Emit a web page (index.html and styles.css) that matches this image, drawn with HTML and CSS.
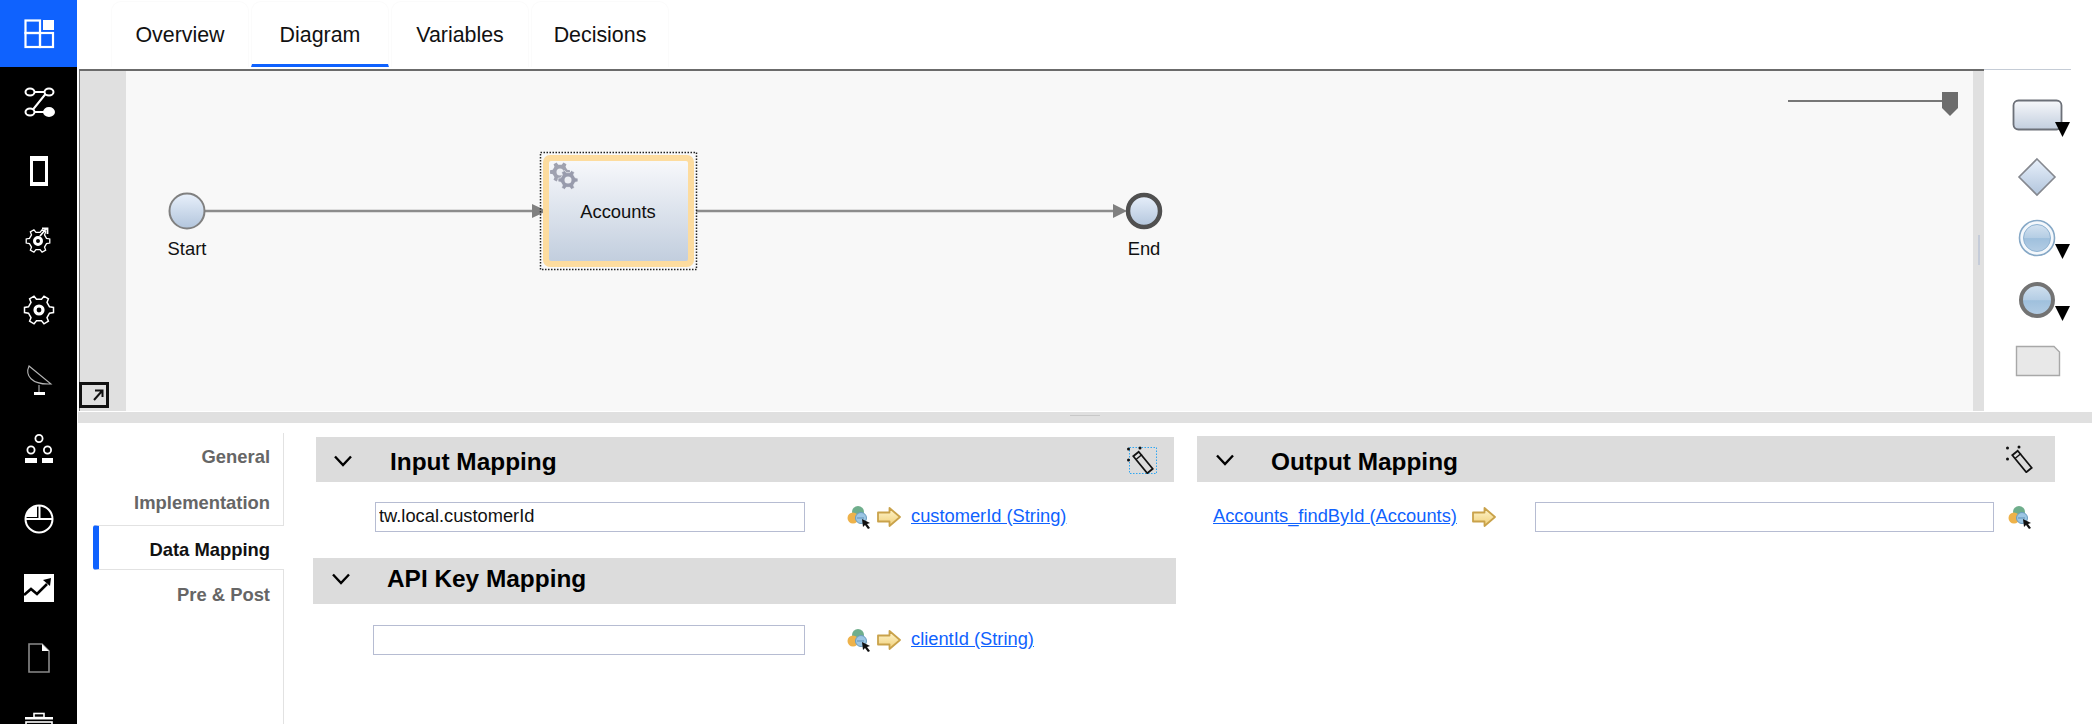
FILE: index.html
```html
<!DOCTYPE html>
<html lang="en">
<head>
<meta charset="UTF-8">
<title>Service Flow Diagram</title>
<link rel="stylesheet" href="styles.css">
</head>
<body>
<!-- shared gradients and symbols -->
<svg class="defs" aria-hidden="true">
    <defs>
        <linearGradient id="gradTask" x1="0" y1="0" x2="0" y2="1">
            <stop offset="0" stop-color="#f7f8fb"/>
            <stop offset="1" stop-color="#c2cede"/>
        </linearGradient>
        <linearGradient id="gradEvent" x1="0" y1="0" x2="0" y2="1">
            <stop offset="0" stop-color="#e8f0fb"/>
            <stop offset="1" stop-color="#b2c5dc"/>
        </linearGradient>
        <linearGradient id="gradBall" x1="0" y1="0" x2="0" y2="1">
            <stop offset="0" stop-color="#d3e2f0"/>
            <stop offset="0.5" stop-color="#b4cde4"/>
            <stop offset="0.52" stop-color="#9fc0dd"/>
            <stop offset="1" stop-color="#b4cde4"/>
        </linearGradient>
        <linearGradient id="gradArrow" x1="0" y1="0" x2="0" y2="1">
            <stop offset="0" stop-color="#fff6cf"/>
            <stop offset="1" stop-color="#f0cf78"/>
        </linearGradient>
        <symbol id="gear" viewBox="-16 -16 32 32">
            <polygon points="10.5,-3.2 14.5,-2.5 14.5,2.5 10.5,3.2 8,7.5 9.4,11.2 5,13.8 2.5,10.7 -2.5,10.7 -5,13.8 -9.4,11.2 -8,7.5 -10.5,3.2 -14.5,2.5 -14.5,-2.5 -10.5,-3.2 -8,-7.5 -9.4,-11.2 -5,-13.8 -2.5,-10.7 2.5,-10.7 5,-13.8 9.4,-11.2 8,-7.5"/>
        </symbol>
        <symbol id="picker" viewBox="0 0 24 24">
            <circle cx="11" cy="7" r="6" fill="#6fae8c"/>
            <circle cx="6" cy="13" r="5.5" fill="#eeb24a"/>
            <circle cx="14" cy="13" r="5.5" fill="#9cc6e4" stroke="#6a9cc0"/>
            <path d="M10 13h7" stroke="#5f8fb5"/>
            <polygon points="15,14 23,18 20,19 23,23 21,24 18,20 16,22" fill="#111"/>
        </symbol>
        <symbol id="arrow" viewBox="0 0 24 20">
            <path d="M1 5.5H12.5V1L23 10L12.5 19V14.5H1Z" fill="url(#gradArrow)" stroke="#c9a24a" stroke-width="1.8" stroke-linejoin="round"/>
        </symbol>
        <symbol id="wand" viewBox="0 0 30 28">
            <polygon points="11.7,5.8 25.7,22.8 20.3,27.2 6.3,10.2" fill="none" stroke="#111" stroke-width="1.8"/>
            <path d="M9 13.5L15 8.5" stroke="#111" stroke-width="1.4"/>
            <circle cx="1.5" cy="3" r="1.5" fill="#111"/>
            <circle cx="13" cy="2" r="1.5" fill="#111"/>
            <circle cx="1.5" cy="14" r="1.5" fill="#111"/>
        </symbol>
        <symbol id="chevron" viewBox="0 0 20 12">
            <path d="M2 1.5L10 10L18 1.5" fill="none" stroke="#000" stroke-width="2.4"/>
        </symbol>
    </defs>
</svg>

<nav class="side">
    <a class="side-item active">
        <svg viewBox="0 0 32 32" fill="none" stroke="#fff" stroke-width="2.2">
            <rect x="2.5" y="2.5" width="14.5" height="12.5"/>
            <rect x="2.5" y="15" width="14.5" height="14"/>
            <rect x="17" y="15" width="13" height="14"/>
            <rect x="20" y="2" width="11" height="10" fill="#fff" stroke="none"/>
        </svg>
    </a>
    <a class="side-item">
        <svg viewBox="0 0 32 32" fill="none" stroke="#fff" stroke-width="2">
            <ellipse cx="7" cy="6" rx="4.5" ry="3.5"/>
            <ellipse cx="26" cy="6" rx="4.5" ry="3.5"/>
            <ellipse cx="7" cy="26" rx="4.5" ry="3.5"/>
            <ellipse cx="26" cy="26" rx="5" ry="4" fill="#fff"/>
            <path d="M11.5 6H21.5M11.5 26H21M22.5 8L10 23.5"/>
        </svg>
    </a>
    <a class="side-item">
        <svg viewBox="0 0 32 32">
            <rect x="7" y="1" width="18" height="30" fill="#fff"/>
            <rect x="10" y="6" width="12" height="21" fill="#000"/>
        </svg>
    </a>
    <a class="side-item">
        <svg viewBox="0 0 32 32">
            <use href="#gear" x="2" y="3" width="26" height="26" fill="none" stroke="#fff" stroke-width="1.6"/>
            <circle cx="15" cy="16" r="3.5" fill="none" stroke="#fff" stroke-width="3"/>
            <path d="M17 11L23 4M19 3.5H24.5V9" fill="none" stroke="#fff" stroke-width="1.8"/>
        </svg>
    </a>
    <a class="side-item">
        <svg viewBox="0 0 32 32">
            <use href="#gear" x="0" y="0" width="32" height="32" fill="none" stroke="#fff" stroke-width="1.5"/>
            <circle cx="16" cy="16" r="4" fill="none" stroke="#fff" stroke-width="3.2"/>
        </svg>
    </a>
    <a class="side-item">
        <svg viewBox="0 0 32 32" fill="none">
            <path d="M6 2C2 11 8 21 28 20Z" stroke="#b5b5b5" stroke-width="1.1"/>
            <path d="M16 21V28" stroke="#b5b5b5" stroke-width="1.1"/>
            <rect x="11" y="28" width="11" height="3" fill="#fff"/>
        </svg>
    </a>
    <a class="side-item">
        <svg viewBox="0 0 32 32" fill="none" stroke="#fff" stroke-width="1.8">
            <circle cx="16" cy="5.5" r="3.6"/>
            <circle cx="8" cy="17" r="3.6"/>
            <circle cx="24.5" cy="17" r="3.6"/>
            <rect x="2" y="25" width="12" height="5" fill="#fff" stroke="none"/>
            <rect x="19" y="25" width="11" height="5" fill="#fff" stroke="none"/>
        </svg>
    </a>
    <a class="side-item">
        <svg viewBox="0 0 32 32" fill="none" stroke="#fff" stroke-width="2">
            <circle cx="16" cy="16" r="13.5"/>
            <path d="M14 14V2.8A13.5 13.5 0 0 0 2.8 14Z" fill="#fff" stroke="none"/>
            <path d="M2.5 16H29.5M16.5 16V2.5"/>
        </svg>
    </a>
    <a class="side-item">
        <svg viewBox="0 0 32 32">
            <rect x="1" y="2" width="30" height="28" fill="#fff"/>
            <path d="M1 23L8 17L14 22L24 12" fill="none" stroke="#000" stroke-width="2.6"/>
            <polygon points="20,8 28,6 27,14" fill="#000"/>
        </svg>
    </a>
    <a class="side-item">
        <svg viewBox="0 0 32 32">
            <path d="M6 2H19L26 9V30H6Z" fill="none" stroke="#8a8a8a" stroke-width="1.6"/>
            <path d="M19 2L26 9H19Z" fill="#fff"/>
        </svg>
    </a>
    <a class="side-item">
        <svg viewBox="0 0 32 32">
            <rect x="11" y="2.5" width="10" height="4" fill="none" stroke="#fff" stroke-width="1.6"/>
            <rect x="2" y="6" width="28" height="2.5" fill="#fff"/>
            <rect x="3" y="11" width="26" height="18" fill="none" stroke="#fff" stroke-width="1.6"/>
        </svg>
    </a>
</nav>

<div class="main">
    <div class="tabs">
        <a class="tab">Overview</a>
        <a class="tab active">Diagram</a>
        <a class="tab">Variables</a>
        <a class="tab">Decisions</a>
    </div>

    <div class="editor">
        <div class="canvas">
            <div class="strip-left">
                <div class="expand">
                    <svg viewBox="0 0 24 20" fill="none" stroke="#111" stroke-width="2">
                        <path d="M12 15L20 6M13 5.5H20.5V12"/>
                    </svg>
                </div>
            </div>
            <!-- viewBox uses page coordinates, the flow is a free canvas -->
            <svg class="flow" viewBox="126 71 1847 340">
                <path d="M205 211H534M696 211H1115" stroke="#8c8c8c" stroke-width="2.4" fill="none"/>
                <polygon points="532,204 547,211 532,218" fill="#808080"/>
                <polygon points="1113,204 1127,211 1113,218" fill="#808080"/>

                <circle cx="187" cy="211" r="17.5" fill="url(#gradEvent)" stroke="#808080" stroke-width="2"/>
                <text class="node-label" x="187" y="255">Start</text>

                <rect x="540.5" y="152.5" width="156" height="117" fill="none" stroke="#222" stroke-width="1.5" stroke-dasharray="1.5 1.5"/>
                <rect x="543" y="155" width="151" height="112" rx="7" fill="#fddc9f"/>
                <rect x="549" y="161" width="139" height="100" rx="2" fill="url(#gradTask)"/>
                <use href="#gear" x="549" y="161" width="22" height="22" fill="#a0a2b0"/>
                <circle cx="560" cy="172" r="3.5" fill="#eceef3"/>
                <use href="#gear" x="557" y="169" width="22" height="22" fill="#989bac" stroke="#eef0f5" stroke-width="1"/>
                <circle cx="568" cy="180" r="3.5" fill="#eceef3"/>
                <text class="node-label" x="618" y="218">Accounts</text>

                <circle cx="1144" cy="211" r="16" fill="url(#gradEvent)" stroke="#505050" stroke-width="4.5"/>
                <text class="node-label" x="1144" y="255">End</text>

                <path d="M1788 101H1958" stroke="#777" stroke-width="2"/>
                <polygon points="1942,92 1958,92 1958,108 1950,116 1942,108" fill="#6d6d6d"/>
            </svg>
            <div class="strip-right"><span class="grip-v"></span></div>
        </div>
        <div class="palette">
            <svg viewBox="0 0 70 60">
                <rect x="11.5" y="15.5" width="48" height="29" rx="5" fill="url(#gradTask)" stroke="#6c7078" stroke-width="1.8"/>
                <polygon points="53,37 68,37 60.5,52" fill="#000"/>
            </svg>
            <svg viewBox="0 0 70 60">
                <polygon points="35,12 53,30 35,48 17,30" fill="url(#gradEvent)" stroke="#85888f" stroke-width="1.6"/>
            </svg>
            <svg viewBox="0 0 70 60">
                <circle cx="35" cy="30" r="17.5" fill="#f4f8fc" stroke="#86a8c6" stroke-width="1.6"/>
                <circle cx="35" cy="30" r="13.5" fill="url(#gradBall)" stroke="#8fb3d2"/>
                <polygon points="53,36 68,36 60.5,51" fill="#000"/>
            </svg>
            <svg viewBox="0 0 70 60">
                <circle cx="35" cy="30" r="16" fill="url(#gradBall)" stroke="#737373" stroke-width="4"/>
                <polygon points="53,36 68,36 60.5,51" fill="#000"/>
            </svg>
            <svg viewBox="0 0 70 60">
                <path d="M14.5 15.5H52L57.5 21V44.5H14.5Z" fill="#e8e8e8" stroke="#a8a8a8" stroke-width="1.4"/>
            </svg>
        </div>
    </div>

    <div class="splitter"><span class="grip-h"></span></div>

    <div class="lower">
        <ul class="steps">
            <li class="step">General</li>
            <li class="step">Implementation</li>
            <li class="step active">Data Mapping</li>
            <li class="step step-post">Pre &amp; Post</li>
            <li class="step rest"></li>
        </ul>

        <div class="mapping">
            <section class="column col-in">
                <div class="bar bar-input">
                    <svg class="chev"><use href="#chevron"/></svg>
                    <h3>Input Mapping</h3>
                    <svg class="wand" viewBox="0 0 30 28">
                        <rect x="2.5" y="1.5" width="27" height="26" fill="none" stroke="#2ea6f2" stroke-dasharray="1.5 1.5"/>
                        <use href="#wand"/>
                    </svg>
                </div>
                <div class="row row-input">
                    <input class="field field-a" type="text" value="tw.local.customerId">
                    <svg class="picker"><use href="#picker"/></svg>
                    <svg class="arrow"><use href="#arrow"/></svg>
                    <a class="link" href="#">customerId (String)</a>
                </div>

                <div class="bar bar-api">
                    <svg class="chev"><use href="#chevron"/></svg>
                    <h3>API Key Mapping</h3>
                </div>
                <div class="row row-api">
                    <input class="field field-b" type="text">
                    <svg class="picker"><use href="#picker"/></svg>
                    <svg class="arrow"><use href="#arrow"/></svg>
                    <a class="link" href="#">clientId (String)</a>
                </div>
            </section>

            <section class="column col-out">
                <div class="bar bar-output">
                    <svg class="chev"><use href="#chevron"/></svg>
                    <h3>Output Mapping</h3>
                    <svg class="wand" viewBox="0 0 30 28"><use href="#wand"/></svg>
                </div>
                <div class="row row-output">
                    <a class="link" href="#">Accounts_findById (Accounts)</a>
                    <svg class="arrow"><use href="#arrow"/></svg>
                    <input class="field field-c" type="text">
                    <svg class="picker"><use href="#picker"/></svg>
                </div>
            </section>
        </div>
    </div>
</div>
</body>
</html>
```
FILE: styles.css
```css
html, body {
    height: 100%;
}
body {
    margin: 0;
    display: flex;
    height: 724px;
    overflow: hidden;
    background-color: #fff;
    font-family: "Liberation Sans", Arial, sans-serif;
    color: #111;
}
.defs {
    width: 0;
    height: 0;
    flex: none;
}

/* left icon rail */
.side {
    width: 77px;
    flex: none;
    background-color: #000;
    overflow: hidden;
}
.side-item {
    display: flex;
    align-items: center;
    justify-content: center;
    height: 69.5px;
}
.side-item.active {
    height: 67px;
    background-color: #0f62fe;
}
.side-item svg {
    width: 32px;
    height: 32px;
}

.main {
    flex: 1;
    min-width: 0;
    display: flex;
    flex-direction: column;
}

/* top tabs */
.tabs {
    display: flex;
    gap: 2px;
    height: 68px;
    padding: 1px 0 0 34px;
}
.tab {
    box-sizing: border-box;
    width: 138px;
    height: 66px;
    padding-top: 21px;
    border: 1px solid #fbfbfb;
    border-bottom: none;
    border-radius: 10px 10px 0 0;
    text-align: center;
    font-size: 21.4px;
    line-height: 25px;
}
.tab.active {
    border-bottom: 3px solid #0f62fe;
}

/* diagram area */
.editor {
    display: flex;
    height: 342px;
    padding-left: 2px;
}
.canvas {
    display: flex;
    flex: none;
    width: 1905px;
    border-top: 2px solid #6b6b6b;
    background-color: #f8f8f8;
}
.strip-left {
    box-sizing: border-box;
    display: flex;
    align-items: flex-end;
    width: 47px;
    padding-bottom: 3px;
    border-left: 1px solid #777;
    background-color: #e0e0e0;
}
.expand {
    box-sizing: border-box;
    width: 30px;
    height: 26px;
    margin-left: -1px;
    border: 3px solid #111;
}
.expand svg {
    display: block;
    width: 100%;
    height: 100%;
}
.flow {
    display: block;
    width: 1847px;
    height: 340px;
}
.node-label {
    font-size: 18.4px;
    text-anchor: middle;
    fill: #111;
}
.strip-right {
    display: flex;
    align-items: center;
    justify-content: center;
    width: 11px;
    background-color: #e0e0e0;
}
.grip-v {
    width: 2px;
    height: 30px;
    margin-top: 18px;
    background-color: #c5ccd9;
}
.palette {
    display: flex;
    flex-direction: column;
    gap: 1.5px;
    width: 87px;
    height: 326px;
    padding: 15px 0 0 18px;
    box-sizing: border-box;
    border-top: 1px solid #c5ccd6;
}
.palette svg {
    flex: none;
    width: 70px;
    height: 60px;
}

.splitter {
    display: flex;
    align-items: flex-start;
    justify-content: center;
    height: 11px;
    margin: 1px 0 0 1px;
    padding-top: 3px;
    box-sizing: border-box;
    background-color: #e0e0e0;
}
.grip-h {
    width: 30px;
    height: 1px;
    background-color: #c8c8c8;
}

/* lower properties panel */
.lower {
    flex: 1;
    display: flex;
    min-height: 0;
}
.steps {
    display: flex;
    flex-direction: column;
    flex: none;
    width: 191px;
    margin: 10px 0 0 16px;
    padding: 0;
    list-style: none;
}
.step {
    box-sizing: border-box;
    height: 46px;
    padding: 13px 13px 0 0;
    border-right: 1px solid #e2e2e2;
    text-align: right;
    font-size: 18.4px;
    line-height: 22px;
    font-weight: bold;
    color: #666;
}
.step.active {
    height: 45px;
    padding-top: 13px;
    padding-right: 14px;
    border: 1px solid #e2e2e2;
    border-right: none;
    border-left: 6px solid #0f62fe;
    border-radius: 3px 0 0 3px;
    color: #111;
}
.step-post {
    padding-top: 14px;
}
.step.rest {
    flex: 1;
}

.mapping {
    display: flex;
    gap: 21px;
    padding: 13px 0 0 29px;
}
.column {
    flex: none;
}
.col-in {
    width: 863px;
}
.col-out {
    width: 858px;
}
.bar {
    display: flex;
    align-items: center;
    background-color: #dcdcdc;
}
.bar h3 {
    margin: 5px 0 0;
    font-size: 24.4px;
    line-height: 28px;
    font-weight: bold;
    color: #000;
}
.chev {
    flex: none;
    width: 20px;
    height: 12px;
    margin-right: 36px;
}
.wand {
    flex: none;
    width: 30px;
    height: 28px;
    margin-left: auto;
}
.bar-input {
    height: 45px;
    margin: 1px 2px 0 3px;
    padding: 0 17px;
}
.bar-input .chev {
    margin-right: 37px;
    margin-top: 2px;
}
.bar-api {
    height: 46px;
    margin-top: 26px;
    padding-left: 18px;
}
.bar-api .chev,
.bar-api h3 {
    margin-top: 0;
    margin-bottom: 5px;
}
.bar-output {
    height: 46px;
    padding: 0 19px 0 18px;
}
.bar-output .chev {
    margin-top: 2px;
}

.row {
    display: flex;
    align-items: center;
    height: 30px;
}
.row-input {
    margin-top: 20px;
    padding-left: 62px;
}
.row-api {
    margin-top: 21px;
    padding-left: 60px;
}
.row-output {
    margin-top: 20px;
    padding-left: 16px;
}
.field {
    box-sizing: border-box;
    height: 30px;
    padding: 0 3px 2px;
    border: 1px solid #b6bcd2;
    background-color: #fff;
    font-family: inherit;
    font-size: 18.3px;
    color: #111;
}
.field-a {
    width: 430px;
}
.field-b {
    width: 432px;
}
.field-c {
    width: 459px;
    margin: 0 14px 0 39px;
}
.picker {
    flex: none;
    width: 24px;
    height: 24px;
}
.arrow {
    flex: none;
    width: 24px;
    height: 20px;
}
.row-input .picker,
.row-api .picker {
    margin: 0 6px 0 42px;
}
.row-input .link,
.row-api .link {
    margin-left: 10px;
}
.row-output .arrow {
    margin-left: 15px;
}
.link {
    margin-bottom: 2px;
    font-size: 18.3px;
    color: #0f62fe;
    text-decoration: underline;
    white-space: nowrap;
}
```
